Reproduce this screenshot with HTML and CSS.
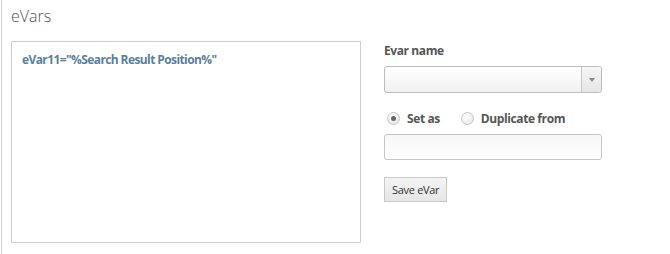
FILE: index.html
```html
<!DOCTYPE html>
<html lang="en">
<head>
  <meta charset="UTF-8">
  <title>eVars</title>
  <link rel="stylesheet" href="styles.css">
</head>
<body>
<div class="panel">
  <h2 class="panel-title">eVars</h2>
  <div class="panel-body">
    <div class="evar-list">
      <div class="evar-item">eVar11="%Search Result Position%"</div>
    </div>
    <form class="evar-form">
      <label class="field-label">Evar name</label>
      <div class="select-box">
        <span class="select-value"></span>
        <span class="select-arrow"><span class="arrow-tri"></span></span>
      </div>
      <div class="radio-row">
        <label class="radio"><span class="radio-dot checked"></span>Set as</label>
        <label class="radio"><span class="radio-dot"></span>Duplicate from</label>
      </div>
      <div class="text-input"></div>
      <button type="button" class="btn-save">Save eVar</button>
    </form>
  </div>
</div>
</body>
</html>
```

FILE: styles.css
```css
html, body {
  margin: 0; padding: 0;
  background: #fff;
}
body { font-family: 'Open Sans', 'Liberation Sans', Arial, sans-serif; color: #555; }

.panel {
  height: 254px;
  border-left: 1px solid #d0d0d0;
  margin-left: 1px;
  padding: 0 0 0 9px;
  box-sizing: border-box;
}
.panel-title {
  margin: 0;
  padding-top: 5px;
  font-size: 16px;
  font-weight: 300;
  color: #555;
  height: 41px;
  box-sizing: border-box;
}
.panel-body {
  display: flex;
  align-items: flex-start;
}

/* список */
.evar-list {
  width: 350px;
  height: 202px;
  border: 1px solid #cdcdcd;
  padding: 9px 10px;
  box-sizing: border-box;
}
.evar-item {
  font-size: 12px;
  font-weight: 700;
  color: #5a7f9c;
  letter-spacing: -0.6px;
}

/* форма */
.evar-form {
  margin-left: 23px;
  width: 218px;
  padding-top: 1px;
}
.field-label {
  display: block;
  font-size: 12px;
  font-weight: 700;
  color: #555;
  letter-spacing: -0.4px;
  margin-bottom: 7px;
}
.select-box {
  display: flex;
  height: 27px;
  border: 1px solid #bdbdbd;
  border-radius: 3px;
  background: linear-gradient(#fff, #f1f1f1);
  box-sizing: border-box;
}
.select-value { flex: 1; }
.select-arrow {
  width: 19px;
  border-left: 1px solid #c8c8c8;
  display: flex;
  align-items: center;
  justify-content: center;
  background: linear-gradient(#f6f6f6, #e6e6e6);
  border-radius: 0 3px 3px 0;
}
.arrow-tri {
  width: 0; height: 0;
  border-left: 3px solid transparent;
  border-right: 3px solid transparent;
  border-top: 4px solid #888;
}

.radio-row {
  display: flex;
  gap: 21px;
  margin: 17px 0 7px 3px;
}
.radio {
  display: flex;
  align-items: center;
  font-size: 12px;
  font-weight: 700;
  color: #555;
  letter-spacing: -0.4px;
}
.radio-dot {
  width: 11px; height: 11px;
  border-radius: 50%;
  border: 1px solid #c4c4c4;
  background: radial-gradient(circle at 40% 35%, #fff, #e4e4e4);
  margin-right: 7px;
  display: flex;
  align-items: center;
  justify-content: center;
}
.radio-dot.checked::after {
  content: "";
  width: 5px; height: 5px;
  border-radius: 50%;
  background: #666;
}

.text-input {
  height: 26px;
  border: 1px solid #c6c6c6;
  border-radius: 3px;
  background: linear-gradient(#f7f7f7, #fff);
  box-sizing: border-box;
}

.btn-save {
  margin-top: 17px;
  height: 25px;
  padding: 0 7px;
  font-family: inherit;
  font-size: 11px;
  color: #333;
  letter-spacing: -0.3px;
  background: linear-gradient(#f3f3f3, #e6e6e6);
  border: 1px solid #c8c8c8;
  border-radius: 0;
}
```
